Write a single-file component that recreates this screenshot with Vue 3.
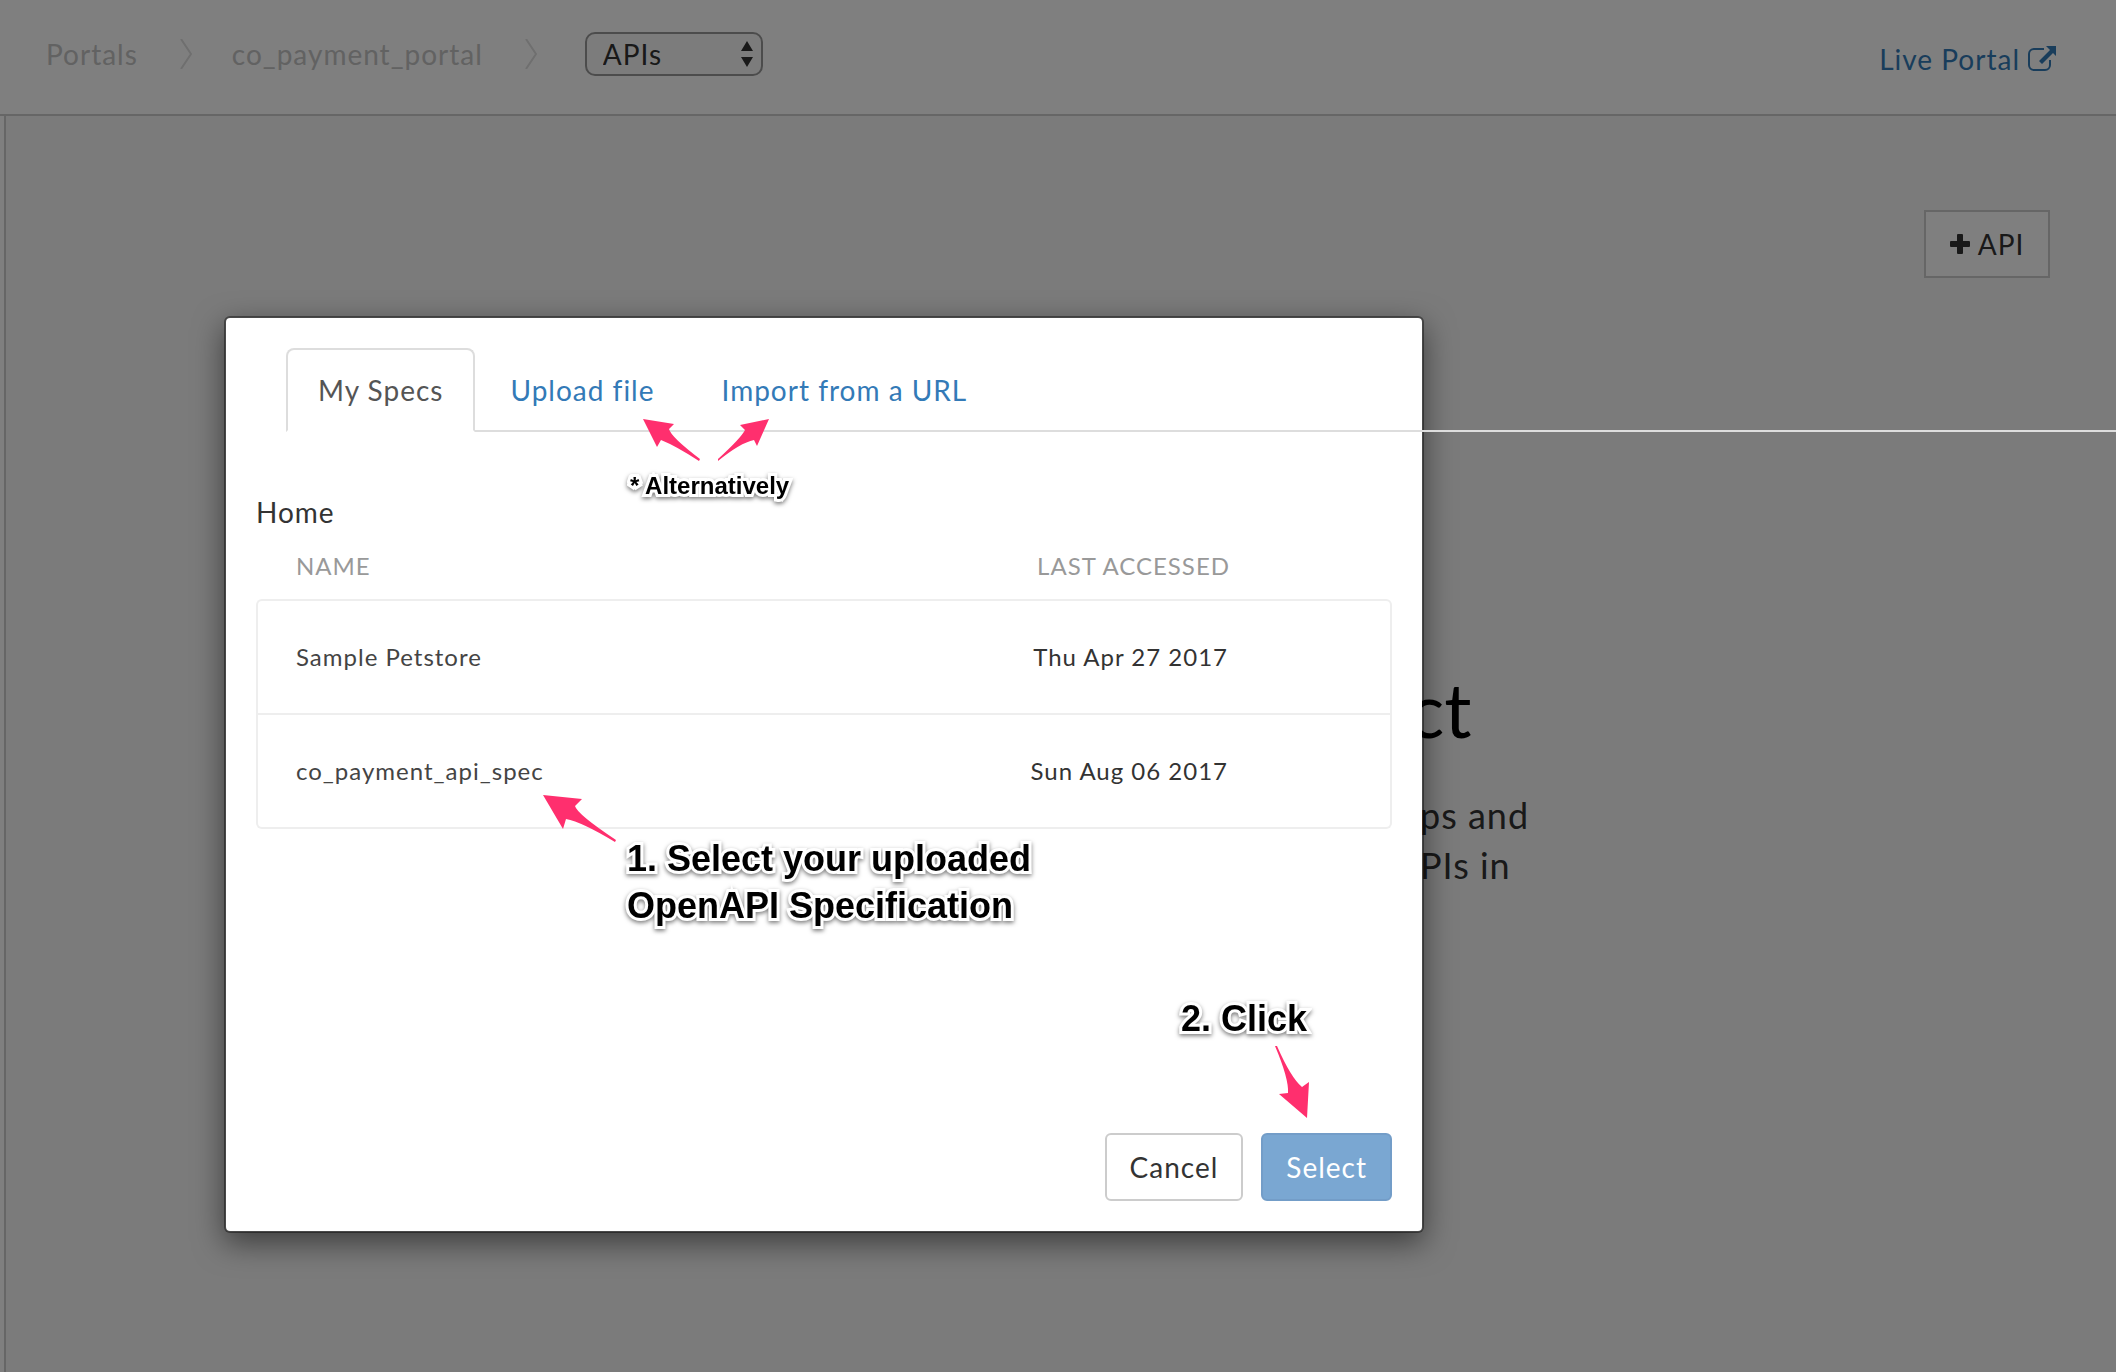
<script setup>
import { ref } from 'vue'

const section = ref('APIs')
const sections = ['APIs', 'Theme', 'Pages']
const tabs = ['My Specs', 'Upload file', 'Import from a URL']
const activeTab = ref('My Specs')
const specs = [
  { name: 'Sample Petstore', accessed: 'Thu Apr 27 2017' },
  { name: 'co_payment_api_spec', accessed: 'Sun Aug 06 2017' },
]
</script>

<template>
  <div class="page">
    <header class="topbar">
      <nav class="crumbs" aria-label="Breadcrumb">
        <a href="#portals">Portals</a>
        <svg class="chevron" viewBox="0 0 12 30" aria-hidden="true"><path d="M1 0 11 15 1 30" /></svg>
        <a href="#portal">co_payment_portal</a>
        <svg class="chevron" viewBox="0 0 12 30" aria-hidden="true"><path d="M1 0 11 15 1 30" /></svg>
        <span class="picker">
          <select v-model="section" aria-label="Section">
            <option v-for="s in sections" :key="s">{{ s }}</option>
          </select>
          <svg viewBox="0 0 14 26" aria-hidden="true"><path d="M7 0 13 10H1zM7 26 13 16H1z" /></svg>
        </span>
      </nav>
      <a class="live" href="#live">
        Live Portal
        <svg viewBox="0 0 28 26" aria-hidden="true">
          <path d="M16 3H6a5 5 0 0 0-5 5v11a5 5 0 0 0 5 5h11a5 5 0 0 0 5-5v-5" fill="none" stroke="currentColor" stroke-width="2" />
          <path d="M18 0h10v10l-3-3-11 11-3-3L22 4z" fill="currentColor" />
        </svg>
      </a>
    </header>

    <div class="body">
      <div class="rail"></div>
      <main class="content">
        <div class="toolbar">
          <button class="add" type="button">
            <svg viewBox="0 0 20 20" aria-hidden="true">
              <path d="M8 0h4q1 0 1 1v6h6q1 0 1 1v4q0 1-1 1h-6v6q0 1-1 1H8q-1 0-1-1v-6H1q-1 0-1-1V8q0-1 1-1h6V1q0-1 1-1z" fill="currentColor" />
            </svg>
            API
          </button>
        </div>
        <section class="intro">
          <h1>ct</h1>
          <p>ps and<br>PIs in</p>
        </section>
      </main>
    </div>

    <div class="backdrop">
      <div class="modal" role="dialog" aria-label="Select a spec">
        <div class="tabs" role="tablist">
          <a
            v-for="tab in tabs"
            :key="tab"
            href="#"
            role="tab"
            :class="{ active: tab === activeTab }"
            :aria-selected="tab === activeTab"
            @click.prevent="activeTab = tab"
          >{{ tab }}</a>
        </div>

        <h2>Home</h2>
        <table>
          <thead>
            <tr><th>NAME</th><th>LAST ACCESSED</th></tr>
          </thead>
          <tbody>
            <tr v-for="spec in specs" :key="spec.name">
              <td>{{ spec.name }}</td>
              <td>{{ spec.accessed }}</td>
            </tr>
          </tbody>
        </table>

        <footer>
          <button type="button">Cancel</button>
          <button type="button" class="primary">Select</button>
        </footer>

        <svg class="arrows" viewBox="224 316 1200 916" aria-hidden="true">
          <path d="M643 419 674 424 669 429Q671 437 700 459L699 461Q676 446 661 440L657 447Z" />
          <path d="M769 419 757 446 754 440Q740 443 718 461L718 459Q741 438 745 430L740 425Z" />
          <path d="M543 795 582 799 575 806Q577 814 616 840L615 842Q582 822 566 819L563 829Z" />
          <path d="M1307 1118 1279 1094 1288 1093Q1289 1079 1275 1046L1277 1046Q1291 1078 1302 1087L1309 1082Z" />
        </svg>
        <p class="note alt">* Alternatively</p>
        <p class="note pick">1. Select your uploaded<br>OpenAPI Specification</p>
        <p class="note click">2. Click</p>
      </div>
    </div>
  </div>
</template>

<style>
body {
  margin: 0;
}
</style>

<style scoped>
.page {
  position: relative;
  display: flex;
  flex-direction: column;
  min-height: 100vh;
  overflow: hidden;
  background: #fff;
  color: #333;
  font: 28px/40px Lato, "Open Sans", sans-serif;
  letter-spacing: 1px;
}
* {
  box-sizing: border-box;
}
a {
  color: #337ab7;
  text-decoration: none;
}
button,
select {
  font: inherit;
  letter-spacing: inherit;
  color: inherit;
}
.topbar {
  display: flex;
  justify-content: space-between;
  height: 116px;
  padding: 32px 60px 0 46px;
  border-bottom: 2px solid #ccc;
}
.crumbs {
  display: flex;
  align-items: center;
  height: 44px;
}
.crumbs a {
  color: #c4c4c4;
}
.chevron {
  width: 12px;
  height: 30px;
  margin: 0 40px 0 42px;
  fill: none;
  stroke: #dedede;
  stroke-width: 2;
}
.picker {
  position: relative;
  margin-left: 8px;
}
.picker select {
  display: block;
  width: 178px;
  height: 44px;
  padding: 0 16px;
  border: 2px solid #999;
  border-radius: 10px;
  background: #f8f8f8;
  appearance: none;
}
.picker svg {
  position: absolute;
  top: 9px;
  right: 9px;
  width: 14px;
  height: 26px;
  fill: #333;
}
.live {
  display: flex;
  align-items: center;
  gap: 8px;
  height: 54px;
}
.live svg {
  width: 28px;
  height: 26px;
}
.body {
  display: flex;
  flex: 1;
}
.rail {
  width: 6px;
  border-right: 2px solid #ccc;
  background: #fff;
}
.content {
  flex: 1;
  background: #f7f7f7;
}
.toolbar {
  display: flex;
  justify-content: flex-end;
  padding: 94px 66px 0 0;
}
.add {
  display: flex;
  align-items: center;
  justify-content: center;
  gap: 8px;
  width: 126px;
  height: 68px;
  padding: 0;
  border: 2px solid #ccc;
  background: #fff;
}
.add svg {
  width: 20px;
  height: 20px;
}
.intro {
  padding: 381px 0 0 1402px;
}
.intro h1 {
  margin: 0;
  color: #000;
  font-size: 76px;
  font-weight: 400;
  line-height: 100px;
  letter-spacing: normal;
}
.intro p {
  margin: 31px 0 0 12px;
  font-size: 36px;
  line-height: 50px;
}
.backdrop {
  position: absolute;
  inset: 0;
  padding: 316px 0 0 224px;
  background: rgba(0, 0, 0, 0.5);
}
.modal {
  position: relative;
  width: 1200px;
  padding: 30px;
  border: 2px solid rgba(0, 0, 0, 0.4);
  border-radius: 6px;
  background: #fff;
  background-clip: padding-box;
  box-shadow: 0 10px 30px rgba(0, 0, 0, 0.5);
}
.tabs {
  display: flex;
  gap: 3px;
  width: 200vw;
  margin-left: 30px;
  border-bottom: 2px solid #ddd;
}
.tabs a {
  height: 82px;
  padding: 20px 30px;
  border: 2px solid transparent;
}
.tabs a.active {
  height: 84px;
  margin-bottom: -2px;
  border-color: #ddd #ddd #fff;
  border-radius: 8px 8px 0 0;
  background: #fff;
  color: #555;
}
h2 {
  margin: 60px 0 0;
  font-size: 28px;
  font-weight: 400;
  line-height: 40px;
}
table {
  width: 1136px;
  border-spacing: 0;
  font-size: 24px;
}
th {
  height: 67px;
  padding: 0 40px;
  color: #999;
  font-weight: 400;
  text-align: left;
}
td {
  height: 114px;
  padding: 0 38px;
  border: 2px solid #eee;
  border-top: 0;
}
td:first-child {
  border-right: 0;
  color: #444;
}
td:last-child {
  border-left: 0;
}
th:last-child,
td:last-child {
  padding-right: 162px;
  text-align: right;
}
tbody tr:first-child td {
  height: 116px;
  border-top: 2px solid #eee;
}
tbody tr:first-child td:first-child {
  border-top-left-radius: 6px;
}
tbody tr:first-child td:last-child {
  border-top-right-radius: 6px;
}
tbody tr:last-child td:first-child {
  border-bottom-left-radius: 6px;
}
tbody tr:last-child td:last-child {
  border-bottom-right-radius: 6px;
}
footer {
  display: flex;
  justify-content: flex-end;
  gap: 18px;
  margin-top: 304px;
}
footer button {
  height: 68px;
  padding: 0 23px;
  border: 2px solid #ccc;
  border-radius: 6px;
  background: #fff;
}
footer .primary {
  border-color: #739dc8;
  background: #7aa7d2;
  color: #fff;
}
.arrows {
  position: absolute;
  top: -2px;
  left: -2px;
  width: 1200px;
  height: 916px;
  fill: #ff2f6e;
  pointer-events: none;
}
.note {
  position: absolute;
  margin: 0;
  color: #000;
  font: bold 36px/47px "Liberation Sans", Arial, sans-serif;
  letter-spacing: normal;
  white-space: nowrap;
  -webkit-text-stroke: 6px #fff;
  paint-order: stroke fill;
  filter: drop-shadow(0 2px 2px rgba(0, 0, 0, 0.5));
}
.alt {
  top: 144px;
  left: 404px;
  font-size: 24px;
}
.pick {
  top: 517px;
  left: 401px;
}
.click {
  top: 677px;
  left: 955px;
}
</style>
